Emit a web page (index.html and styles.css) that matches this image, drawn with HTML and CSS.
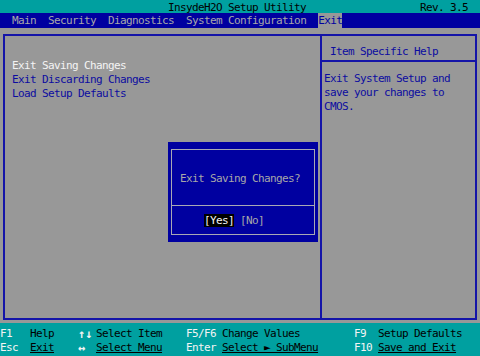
FILE: index.html
```html
<!DOCTYPE html>
<html lang="en">
  <head>
    <meta charset="UTF-8" />
    <title>InsydeH2O Setup Utility</title>
    <link rel="stylesheet" href="styles.css">
  </head>
  <body>
    <div class="screen">
      <div class="title-bar">
        <span class="title">InsydeH2O Setup Utility</span>
        <span class="rev">Rev. 3.5</span>
      </div>

      <div class="menu-bar">
        <span class="menu-item">Main</span>
        <span class="menu-item">Security</span>
        <span class="menu-item">Diagnostics</span>
        <span class="menu-item">System Configuration</span>
        <span class="menu-item active">Exit</span>
      </div>

      <div class="main">
        <div class="panel">
          <div class="options">
            <div class="option selected">Exit Saving Changes</div>
            <div class="option">Exit Discarding Changes</div>
            <div class="option">Load Setup Defaults</div>
          </div>
          <div class="help">
            <div class="help-title">Item Specific Help</div>
            <div class="help-text">Exit System Setup and<br>save your changes to<br>CMOS.</div>
          </div>
        </div>

        <div class="dialog">
          <div class="dialog-inner">
            <div class="dialog-msg">Exit Saving Changes?</div>
            <div class="dialog-actions"><span class="btn active">[Yes]</span> <span class="btn">[No]</span></div>
          </div>
        </div>
      </div>

      <div class="footer">
        <span class="key">F1</span><span class="desc">Help</span>
        <span class="key arrow">↑↓</span><span class="desc">Select Item</span>
        <span class="key">F5/F6</span><span class="desc">Change Values</span>
        <span class="key">F9</span><span class="desc">Setup Defaults</span>

        <span class="key">Esc</span><span class="desc under">Exit</span>
        <span class="key arrow">↔</span><span class="desc under">Select Menu</span>
        <span class="key">Enter</span><span class="desc under">Select ► SubMenu</span>
        <span class="key">F10</span><span class="desc under">Save and Exit</span>
      </div>
    </div>
  </body>
</html>
```

FILE: styles.css
```css
body {
  margin: 0;
  background: #989898;
  font-family: "DejaVu Sans Mono", "Liberation Mono", monospace;
  font-size: 11px;
  letter-spacing: -0.62px;
  line-height: 14.24px;
}
.screen {
  width: 480px;
  height: 356px;
  overflow: hidden;
  position: relative;
}
.title-bar {
  height: 13px;
  line-height: 15px;
  background: #00a0a0;
  color: #000;
  display: flex;
  padding-left: 168px;
  padding-right: 12px;
}
.rev {
  margin-left: auto;
}
.menu-bar {
  height: 15px;
  line-height: 16px;
  background: #0000a0;
  color: #a8a8a8;
  display: flex;
  gap: 12px;
  padding-left: 12px;
}
.menu-item {
  white-space: pre;
}
.menu-item.active {
  background: #989898;
  color: #0000a0;
}
.main {
  height: 295px;
  padding: 6px 3px 3px;
  box-sizing: border-box;
}
.panel {
  height: 286px;
  box-sizing: border-box;
  border: 2px solid #1414a8;
  display: flex;
}
.options {
  width: 315px;
  flex: none;
  padding: 23px 0 0 7px;
  box-sizing: border-box;
}
.option {
  color: #0c0ca0;
  white-space: pre;
}
.option.selected {
  color: #f4f4f4;
}
.help {
  flex: 1;
  border-left: 2px solid #1414a8;
  color: #0c0ca0;
}
.help-title {
  height: 26px;
  padding: 9px 0 0 8px;
  box-sizing: border-box;
  border-bottom: 2px solid #1414a8;
  white-space: pre;
}
.help-text {
  padding: 10px 0 0 2px;
  white-space: nowrap;
}
.dialog {
  position: absolute;
  left: 168px;
  top: 142.4px;
  width: 150px;
  height: 99.7px;
  box-sizing: border-box;
  padding: 7.1px 3px 6.6px 3px;
  background: #0000a0;
}
.dialog-inner {
  height: 100%;
  box-sizing: border-box;
  border: 1px solid #a8a8b4;
}
.dialog-msg {
  height: 56px;
  box-sizing: border-box;
  padding: 21.4px 0 0 8px;
  border-bottom: 1px solid #a8a8b4;
  color: #a8a8a8;
  white-space: pre;
}
.dialog-actions {
  padding: 7.5px 0 0 32px;
  color: #a8a8a8;
  white-space: pre;
}
.btn.active {
  background: #000;
  color: #f4f4f4;
}
.footer {
  position: absolute;
  left: 0;
  top: 323px;
  width: 480px;
  height: 33px;
  box-sizing: border-box;
  padding-top: 4px;
  background: #00a0a0;
  display: grid;
  grid-template-columns: 30px 48px 18px 90px 36px 132px 24px 1fr;
  grid-auto-rows: 14px;
}
.key,
.desc {
  white-space: pre;
}
.key {
  color: #f4f4f4;
}
.key.arrow {
  font-size: 12px;
  letter-spacing: 0;
  font-weight: bold;
}
.desc {
  color: #000;
}
.under {
  text-decoration: underline;
  text-decoration-thickness: 1px;
  text-underline-offset: 1px;
}
```
